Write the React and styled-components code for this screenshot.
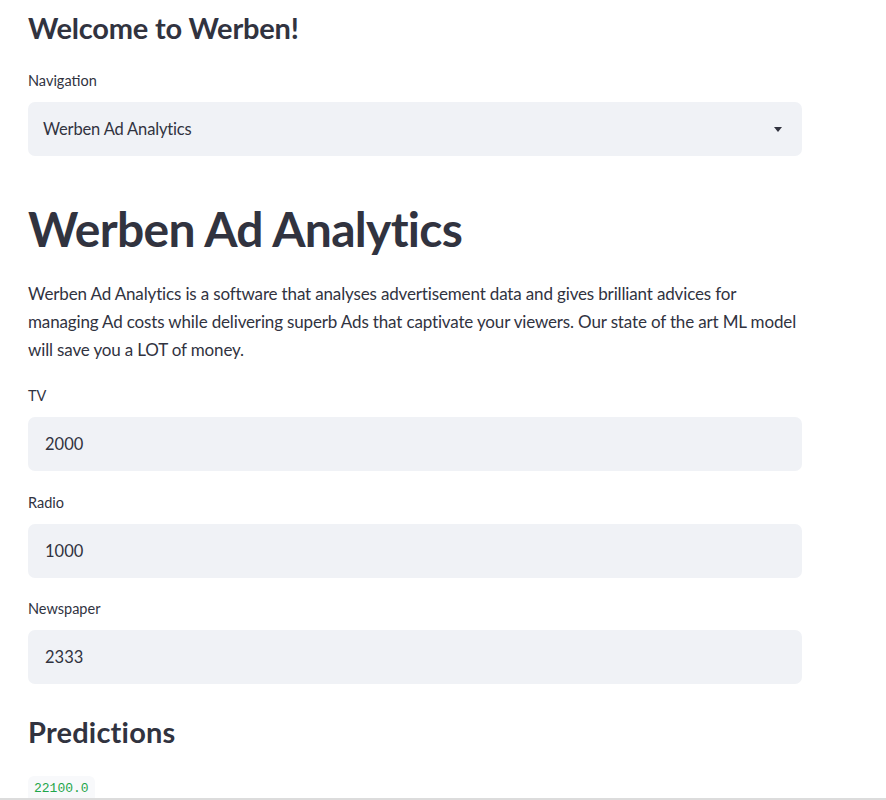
import React from 'react'
import styled, { createGlobalStyle } from 'styled-components'

const GlobalStyle = createGlobalStyle`
  html, body {
    margin: 0;
    padding: 0;
    background: #ffffff;
  }
  body {
    font-family: Lato, "Noto Sans", sans-serif;
    color: #31333f;
    -webkit-font-smoothing: antialiased;
  }
`

const Page = styled.div`
  width: 774px;
  padding: 10px 0 0 28px;
  min-height: 790px;
`

const SubHeader = styled.h2`
  margin: 0;
  font-size: 29px;
  line-height: 36px;
  font-weight: 700;
  letter-spacing: ${p => p.$spacing || -0.2}px;
  margin-top: ${p => p.$top || 0}px;
`

const Title = styled.h1`
  margin: 44px 0 0;
  font-size: 48px;
  line-height: 58px;
  font-weight: 700;
  letter-spacing: -0.7px;
`

const Text = styled.p`
  margin: 22px 0 0;
  font-size: 17px;
  line-height: 28px;
  letter-spacing: -0.15px;
`

const Field = styled.div`
  margin-top: ${p => p.$top}px;
`

const Label = styled.label`
  display: block;
  font-size: 14.5px;
  line-height: 20px;
  margin-bottom: 11px;
`

const Box = styled.div`
  height: 54px;
  border-radius: 7px;
  background: #f0f2f6;
  display: flex;
  align-items: center;
  justify-content: space-between;
  padding: 0 20px 0 ${p => p.$pad}px;
  font-size: ${p => p.$size}px;
  letter-spacing: ${p => p.$spacing || 0}px;
  box-sizing: border-box;
`

const Caret = styled.span`
  width: 0;
  height: 0;
  border-left: 4px solid transparent;
  border-right: 4px solid transparent;
  border-top: 5px solid #31333f;
`

const Code = styled.code`
  display: inline-block;
  margin-top: 26px;
  padding: 4px 6px 6px;
  border-radius: 6px;
  background: #f8f9fb;
  color: #1fa64a;
  font-family: "Liberation Mono", "DejaVu Sans Mono", monospace;
  font-size: 13px;
  line-height: 18px;
`

const BottomEdge = styled.div`
  position: fixed;
  left: 0;
  right: 0;
  bottom: 0;
  height: 2px;
  background: #dcdcdc;
`

const inputs = [
  { label: 'TV', value: '2000', top: 22 },
  { label: 'Radio', value: '1000', top: 22 },
  { label: 'Newspaper', value: '2333', top: 21 },
]

export default function App() {
  return (
    <>
      <GlobalStyle />
      <Page>
        <SubHeader>Welcome to Werben!</SubHeader>
        <Field $top={25}>
          <Label>Navigation</Label>
          <Box $pad={15} $size={16.5} $spacing={-0.15}>
            <span>Werben Ad Analytics</span>
            <Caret />
          </Box>
        </Field>
        <Title>Werben Ad Analytics</Title>
        <Text>
          Werben Ad Analytics is a software that analyses advertisement data and
          gives brilliant advices for managing Ad costs while delivering superb
          Ads that captivate your viewers. Our state of the art ML model will
          save you a LOT of money.
        </Text>
        {inputs.map(f => (
          <Field key={f.label} $top={f.top}>
            <Label>{f.label}</Label>
            <Box $pad={17} $size={16.5}>{f.value}</Box>
          </Field>
        ))}
        <SubHeader $top={30} $spacing={0.2}>Predictions</SubHeader>
        <Code>22100.0</Code>
      </Page>
      <BottomEdge />
    </>
  )
}
